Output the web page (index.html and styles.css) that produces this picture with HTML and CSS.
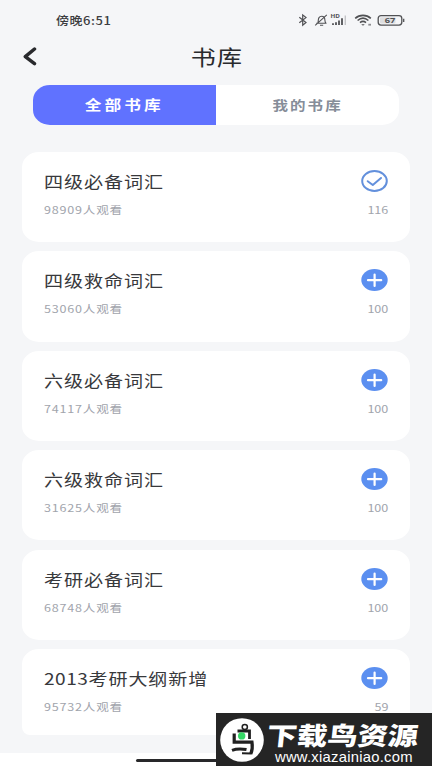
FILE: index.html
```html
<!DOCTYPE html>
<html lang="zh-CN">
<head>
<meta charset="utf-8">
<title>书库</title>
<link rel="stylesheet" href="styles.css">
</head>
<body>
<svg class="defs" width="0" height="0">
  <symbol id="plus" viewBox="0 0 27 22">
    <ellipse cx="13.5" cy="11" rx="13.2" ry="11" fill="#5b8ff0"/>
    <path d="M7 11.2H20.2M13.6 5.5V16.9" stroke="#fff" stroke-width="2.2" stroke-linecap="round"/>
  </symbol>
  <symbol id="check" viewBox="0 0 27 22">
    <ellipse cx="13.5" cy="11" rx="12.3" ry="10" fill="none" stroke="#6390dc" stroke-width="2"/>
    <path d="M6.7 11.2L11.8 15L20 8" fill="none" stroke="#6390dc" stroke-width="2" stroke-linecap="round" stroke-linejoin="round"/>
  </symbol>
</svg>
<div class="screen">
  <header class="status">
    <span class="time">傍晚6:51</span>
    <svg class="status-icons" width="108" height="16" viewBox="0 0 108 16" fill="none" stroke="#505154">
      <path d="M1.3 5.3L8 10.5L4.7 13.3V2.9L8 5.6L1.3 10.8" stroke-width="1.2"/>
      <path d="M18.3 11.3H28.5M19.8 11C20.6 9.6 19.8 7.4 21 5.6C22.2 3.8 25 3.8 26.2 5.4C27.4 7.2 26.4 9.6 27.8 11M22 13.3H25.2M17.2 13.3L28.8 2.8" stroke-width="1.1"/>
      <text class="hd" x="32.6" y="6.3" textLength="9.4" lengthAdjust="spacingAndGlyphs">HD</text>
      <path d="M35 13v-1.8M38 13v-2.8M41 13V8.5M44 13V6.3" stroke-width="1.8"/>
      <path d="M47.3 13V3.5" stroke="#c3c4c7" stroke-width="1.4"/>
      <path d="M57.2 6.3C61.5 2.4 68.5 2.4 72.8 6.3M59.6 8.5C63 5.6 67 5.6 70.4 8.5M62 10.6C64 9 66 9 68 10.6" stroke-width="1.6"/>
      <path d="M63.2 12.2H66.8L65 13.8Z" fill="#505154" stroke="none"/>
      <path d="M70.3 12.7H73" stroke-width="1.8" stroke="#8d8e91"/>
      <rect x="80.2" y="3.7" width="23.6" height="9.4" rx="2.8" stroke-width="1.3"/>
      <rect x="82" y="5.3" width="15.5" height="6.2" rx="1" fill="#dddee0" stroke="none"/>
      <path d="M105.7 6.8V10" stroke-width="1.3"/>
      <text class="battery" x="86.8" y="11.1" textLength="10.6" lengthAdjust="spacingAndGlyphs">67</text>
    </svg>
  </header>
  <nav class="titlebar">
    <svg class="back" width="14" height="20" viewBox="0 0 14 20"><path d="M11.5 2L2.3 9.6L11.5 16.6" fill="none" stroke="#292a2d" stroke-width="3.5" stroke-linecap="round" stroke-linejoin="round"/></svg>
    <h1>书库</h1>
  </nav>
  <div class="tabs">
    <div class="tab active"><span>全部书库</span></div>
    <div class="tab"><span>我的书库</span></div>
  </div>
  <main class="books">
    <article class="card"><div class="row"><h2>四级必备词汇</h2><svg class="icon"><use href="#check"/></svg></div><div class="row meta"><span class="views">98909人观看</span><span class="count">116</span></div></article>
    <article class="card"><div class="row"><h2>四级救命词汇</h2><svg class="icon"><use href="#plus"/></svg></div><div class="row meta"><span class="views">53060人观看</span><span class="count">100</span></div></article>
    <article class="card"><div class="row"><h2>六级必备词汇</h2><svg class="icon"><use href="#plus"/></svg></div><div class="row meta"><span class="views">74117人观看</span><span class="count">100</span></div></article>
    <article class="card"><div class="row"><h2>六级救命词汇</h2><svg class="icon"><use href="#plus"/></svg></div><div class="row meta"><span class="views">31625人观看</span><span class="count">100</span></div></article>
    <article class="card"><div class="row"><h2>考研必备词汇</h2><svg class="icon"><use href="#plus"/></svg></div><div class="row meta"><span class="views">68748人观看</span><span class="count">100</span></div></article>
    <article class="card last"><div class="row"><h2><span class="year">2013</span>考研大纲新增</h2><svg class="icon"><use href="#plus"/></svg></div><div class="row meta"><span class="views">95732人观看</span><span class="count">59</span></div></article>
  </main>
  <footer class="gesture"><div class="handle"></div></footer>
</div>
<aside class="watermark">
  <svg class="bird" width="44" height="44" viewBox="0 0 44 44">
    <circle cx="22" cy="22" r="21.8" fill="#fff"/>
    <g fill="none" stroke="#202020">
      <ellipse cx="24.8" cy="9" rx="2.6" ry="2.5" stroke-width="1.5"/>
      <path d="M17.5 13H29.5V21" stroke-width="2.8"/>
      <path d="M14.2 15.5V24.2H32C32.6 28 32.2 32.5 30.8 36" stroke-width="3.2"/>
      <path d="M12 32.3C17 30.4 21 30.6 26.5 31.6" stroke-width="3"/>
      <path d="M22 35.2L31.5 35.4" stroke-width="2"/>
    </g>
    <circle cx="21.7" cy="17.9" r="3.7" fill="#35d765"/>
  </svg>
  <div class="brand">
    <strong>下载鸟资源</strong>
    <span>www.xiazainiao.com</span>
  </div>
</aside>
</body>
</html>
```

FILE: styles.css
```css
* { box-sizing: border-box; }
body {
  margin: 0;
  width: 432px;
  height: 768px;
  overflow: hidden;
  position: relative;
  background: #fff;
  font-family: "Noto Sans CJK SC", sans-serif;
}
.defs { position: absolute; }
h1, h2 { margin: 0; font-weight: 400; }
.screen { display: flex; flex-direction: column; height: 768px; background: #f5f6f8; }
.status {
  display: flex;
  justify-content: space-between;
  align-items: center;
  height: 40px;
  padding: 0 26px 0 56px;
}
.time {
  font-size: 11.5px;
  font-weight: 500;
  letter-spacing: 0.5px;
  color: #3d3e41;
  transform: scaleX(1.13);
  transform-origin: left;
}
.hd { font: 700 5.5px "Open Sans", sans-serif; fill: #505154; stroke: none; }
.battery { font: 700 7.8px "Open Sans", sans-serif; fill: #505154; stroke: none; }
.titlebar {
  display: grid;
  grid-template-columns: 1fr auto 1fr;
  align-items: center;
  height: 33px;
  padding: 0 23px;
}
h1 {
  font-size: 21px;
  line-height: 32px;
  color: #292a2d;
  letter-spacing: 1px;
  transform: translate(1px, -1px) scaleX(1.19);
}
.tabs {
  display: flex;
  flex: none;
  height: 40px;
  margin: 12px 33px 27px;
  border-radius: 17px / 15px;
  overflow: hidden;
  background: #fff;
}
.tab {
  flex: 1;
  display: flex;
  justify-content: center;
  align-items: center;
  padding-bottom: 2px;
  font-size: 13px;
  font-weight: 700;
  letter-spacing: 1.8px;
  color: #868d99;
}
.tab span { transform: scaleX(1.19); }
.tab.active { color: #fff; background: #6072ff; font-size: 14px; letter-spacing: 2.6px; }
.books { display: flex; flex-direction: column; gap: 9.2px; padding: 0 22px; }
.card {
  flex: none;
  height: 90.2px;
  padding: 17px 22px 0;
  border-radius: 17px / 15px;
  background: #fff;
}
.last { height: 86.5px; border-bottom-left-radius: 8px; border-bottom-right-radius: 8px; }
.row { display: flex; justify-content: space-between; align-items: center; height: 24px; }
h2 {
  font-size: 16.3px;
  line-height: 24px;
  letter-spacing: 0.8px;
  color: #38393c;
  transform: scaleX(1.17);
  transform-origin: left;
}
.year { letter-spacing: 0.45px; }
.icon { width: 27px; height: 22px; }
.meta { margin-top: 11px; height: 12px; font-size: 10.4px; line-height: 12px; color: #a1a4ac; }
.views, .count { letter-spacing: 0.65px; transform: scaleX(1.21); transform-origin: left; }
.count { letter-spacing: -0.1px; transform-origin: right; }
.gesture { margin-top: auto; height: 15px; padding-top: 6px; background: #fff; }
.handle { width: 160px; height: 3px; margin: 0 auto; border-radius: 2px; background: #28282a; }
.watermark {
  position: absolute;
  left: 216px;
  top: 713px;
  width: 216px;
  height: 53px;
  display: flex;
  align-items: center;
  gap: 3px;
  padding-left: 4px;
  background: #252525;
}
.brand { display: flex; flex-direction: column; color: #fff; white-space: nowrap; }
.brand strong {
  margin-top: 7px;
  font-size: 25px;
  font-weight: 900;
  line-height: 27px;
  transform: scaleX(1.21) skewX(-5deg);
  transform-origin: left;
}
.brand span {
  margin-left: 8px;
  font-family: "Liberation Sans", sans-serif;
  font-size: 14.8px;
  line-height: 18px;
  letter-spacing: 0.25px;
}
```
